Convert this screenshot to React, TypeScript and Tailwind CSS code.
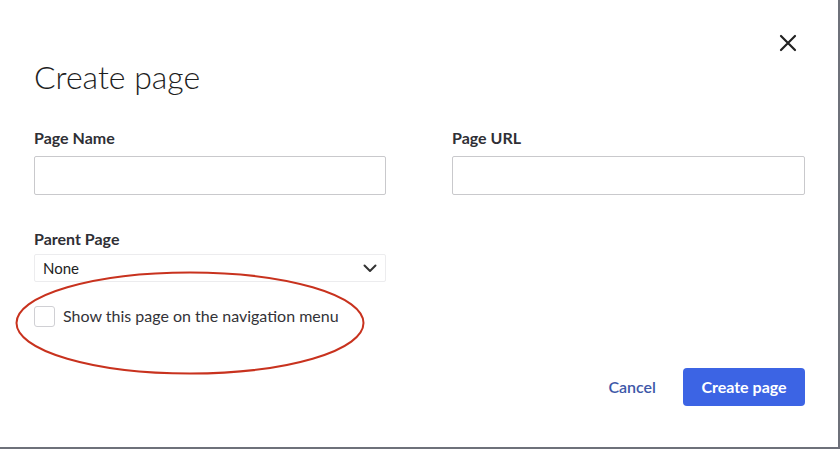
import React from 'react';

const font = { fontFamily: 'Lato, "Noto Sans", sans-serif' };

const CloseIcon = () => (
  <svg width="18" height="18" viewBox="0 0 18 18" fill="none">
    <path d="M2 2L16 16M16 2L2 16" stroke="#222" strokeWidth="2.2" strokeLinecap="round" />
  </svg>
);

const ChevronDown = () => (
  <svg width="14" height="9" viewBox="0 0 14 9" fill="none">
    <path d="M1.5 1.5L7 7L12.5 1.5" stroke="#333" strokeWidth="2" strokeLinecap="round" strokeLinejoin="round" />
  </svg>
);

export default function App() {
  return (
    <div className="w-[840px] h-[449px] bg-[#6e717a]" style={font}>
      <div className="relative w-[838px] h-[447px] bg-white px-[34px] pr-[33px]">
        {/* close */}
        <button className="absolute right-[41px] top-[34px] p-0">
          <CloseIcon />
        </button>

        <h1 className="pt-[56px] text-[32px] leading-[42px] font-light text-[#1e1e1e]">
          Create page
        </h1>

        <div className="mt-[30px] grid grid-cols-[352px_353px] gap-x-[66px]">
          <div>
            <label className="block text-[16px] leading-[20px] font-bold text-[#2f2f35]">Page Name</label>
            <input className="mt-[8px] block w-full h-[39px] rounded-[2px] border border-[#c9c9cc] bg-white" />
          </div>
          <div>
            <label className="block text-[16px] leading-[20px] font-bold text-[#2f2f35]">Page URL</label>
            <input className="mt-[8px] block w-full h-[39px] rounded-[2px] border border-[#c9c9cc] bg-white" />
          </div>
        </div>

        <div className="mt-[34px] w-[352px]">
          <label className="block text-[16px] leading-[20px] font-bold text-[#2f2f35]">Parent Page</label>
          <div className="mt-[5px] flex h-[28px] items-center justify-between rounded-[2px] border border-[#ececee] pl-[8px] pr-[8px]">
            <span className="text-[15px] text-[#222]">None</span>
            <ChevronDown />
          </div>
        </div>

        <div className="mt-[22px] flex items-center gap-[8px]">
          <span className="block w-[21px] h-[21px] rounded-[3px] border border-[#d0d0d4] bg-white" />
          <span className="text-[16px] text-[#333338]">Show this page on the navigation menu</span>
        </div>

        <div className="mt-[40px] flex items-center justify-end gap-[27px]">
          <button className="text-[16px] font-semibold text-[#3d58a8]">Cancel</button>
          <button className="h-[38px] w-[122px] rounded-[4px] bg-[#3c64e4] text-[16px] font-bold text-white">
            Create page
          </button>
        </div>

        {/* red annotation ellipse */}
        <svg className="absolute left-0 top-0 pointer-events-none" width="838" height="447">
          <ellipse cx="190" cy="323" rx="173.5" ry="50.5" fill="none" stroke="#c8321e" strokeWidth="2" />
        </svg>
      </div>
    </div>
  );
}
